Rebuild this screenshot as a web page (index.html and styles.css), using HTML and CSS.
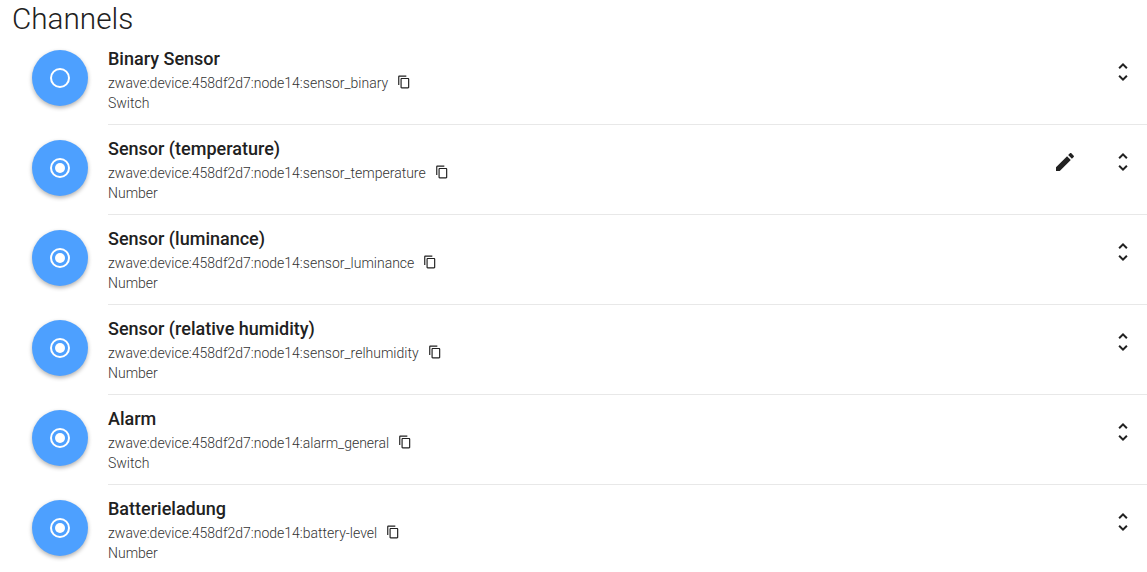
FILE: index.html
```html
<!doctype html>
<html lang="en">
<head>
    <meta charset="utf-8">
    <title>Channels</title>
    <link rel="stylesheet" href="styles.css">
</head>
<body>
    <h1>Channels</h1>
    <ul class="channels">
        <li class="channel">
            <div class="avatar"><svg width="24" height="24" viewBox="0 0 24 24"><circle cx="12" cy="12" r="9" class="ring"/></svg></div>
            <div class="content">
                <div class="info">
                    <h2>Binary Sensor</h2>
                    <p class="uid">zwave:device:458df2d7:node14:sensor_binary<svg class="copy" width="14" height="14" viewBox="0 0 24 24"><path d="M16 1H4c-1.1 0-2 .9-2 2v14h2V3h12V1zm3 4H8c-1.1 0-2 .9-2 2v14c0 1.1.9 2 2 2h11c1.1 0 2-.9 2-2V7c0-1.100-.9-2-2-2zm0 16H8V7h11v14z"/></svg></p>
                    <p class="type">Switch</p>
                </div>
                <svg class="expand" width="24" height="24" viewBox="0 0 24 24"><path d="M12 5.830L15.170 9l1.410-1.410L12 3 7.410 7.590 8.830 9 12 5.830zm0 12.340L8.830 15l-1.410 1.410L12 21l4.590-4.590L15.170 15 12 18.170z"/></svg>
            </div>
        </li>
        <li class="channel">
            <div class="avatar"><svg width="24" height="24" viewBox="0 0 24 24"><circle cx="12" cy="12" r="9" class="ring"/><circle cx="12" cy="12" r="5" class="dot"/></svg></div>
            <div class="content">
                <div class="info">
                    <h2>Sensor (temperature)</h2>
                    <p class="uid">zwave:device:458df2d7:node14:sensor_temperature<svg class="copy" width="14" height="14" viewBox="0 0 24 24"><path d="M16 1H4c-1.1 0-2 .9-2 2v14h2V3h12V1zm3 4H8c-1.1 0-2 .9-2 2v14c0 1.1.9 2 2 2h11c1.1 0 2-.9 2-2V7c0-1.100-.9-2-2-2zm0 16H8V7h11v14z"/></svg></p>
                    <p class="type">Number</p>
                </div>
                <svg class="edit" width="24" height="24" viewBox="0 0 24 24"><path d="M3 17.250V21h3.750L17.810 9.940l-3.750-3.750L3 17.250zM20.710 7.040c.39-.39.39-1.020 0-1.410l-2.340-2.340c-.39-.39-1.020-.39-1.410 0l-1.830 1.830 3.750 3.750 1.830-1.830z"/></svg>
                <svg class="expand" width="24" height="24" viewBox="0 0 24 24"><path d="M12 5.830L15.170 9l1.410-1.410L12 3 7.410 7.590 8.830 9 12 5.830zm0 12.340L8.830 15l-1.410 1.410L12 21l4.590-4.590L15.170 15 12 18.170z"/></svg>
            </div>
        </li>
        <li class="channel">
            <div class="avatar"><svg width="24" height="24" viewBox="0 0 24 24"><circle cx="12" cy="12" r="9" class="ring"/><circle cx="12" cy="12" r="5" class="dot"/></svg></div>
            <div class="content">
                <div class="info">
                    <h2>Sensor (luminance)</h2>
                    <p class="uid">zwave:device:458df2d7:node14:sensor_luminance<svg class="copy" width="14" height="14" viewBox="0 0 24 24"><path d="M16 1H4c-1.1 0-2 .9-2 2v14h2V3h12V1zm3 4H8c-1.1 0-2 .9-2 2v14c0 1.1.9 2 2 2h11c1.1 0 2-.9 2-2V7c0-1.100-.9-2-2-2zm0 16H8V7h11v14z"/></svg></p>
                    <p class="type">Number</p>
                </div>
                <svg class="expand" width="24" height="24" viewBox="0 0 24 24"><path d="M12 5.830L15.170 9l1.410-1.410L12 3 7.410 7.590 8.830 9 12 5.830zm0 12.340L8.830 15l-1.410 1.410L12 21l4.590-4.590L15.170 15 12 18.170z"/></svg>
            </div>
        </li>
        <li class="channel">
            <div class="avatar"><svg width="24" height="24" viewBox="0 0 24 24"><circle cx="12" cy="12" r="9" class="ring"/><circle cx="12" cy="12" r="5" class="dot"/></svg></div>
            <div class="content">
                <div class="info">
                    <h2>Sensor (relative humidity)</h2>
                    <p class="uid">zwave:device:458df2d7:node14:sensor_relhumidity<svg class="copy" width="14" height="14" viewBox="0 0 24 24"><path d="M16 1H4c-1.1 0-2 .9-2 2v14h2V3h12V1zm3 4H8c-1.1 0-2 .9-2 2v14c0 1.1.9 2 2 2h11c1.1 0 2-.9 2-2V7c0-1.100-.9-2-2-2zm0 16H8V7h11v14z"/></svg></p>
                    <p class="type">Number</p>
                </div>
                <svg class="expand" width="24" height="24" viewBox="0 0 24 24"><path d="M12 5.830L15.170 9l1.410-1.410L12 3 7.410 7.590 8.830 9 12 5.830zm0 12.340L8.830 15l-1.410 1.410L12 21l4.590-4.590L15.170 15 12 18.170z"/></svg>
            </div>
        </li>
        <li class="channel">
            <div class="avatar"><svg width="24" height="24" viewBox="0 0 24 24"><circle cx="12" cy="12" r="9" class="ring"/><circle cx="12" cy="12" r="5" class="dot"/></svg></div>
            <div class="content">
                <div class="info">
                    <h2>Alarm</h2>
                    <p class="uid">zwave:device:458df2d7:node14:alarm_general<svg class="copy" width="14" height="14" viewBox="0 0 24 24"><path d="M16 1H4c-1.1 0-2 .9-2 2v14h2V3h12V1zm3 4H8c-1.1 0-2 .9-2 2v14c0 1.1.9 2 2 2h11c1.1 0 2-.9 2-2V7c0-1.100-.9-2-2-2zm0 16H8V7h11v14z"/></svg></p>
                    <p class="type">Switch</p>
                </div>
                <svg class="expand" width="24" height="24" viewBox="0 0 24 24"><path d="M12 5.830L15.170 9l1.410-1.410L12 3 7.410 7.590 8.830 9 12 5.830zm0 12.340L8.830 15l-1.410 1.410L12 21l4.590-4.590L15.170 15 12 18.170z"/></svg>
            </div>
        </li>
        <li class="channel">
            <div class="avatar"><svg width="24" height="24" viewBox="0 0 24 24"><circle cx="12" cy="12" r="9" class="ring"/><circle cx="12" cy="12" r="5" class="dot"/></svg></div>
            <div class="content">
                <div class="info">
                    <h2>Batterieladung</h2>
                    <p class="uid">zwave:device:458df2d7:node14:battery-level<svg class="copy" width="14" height="14" viewBox="0 0 24 24"><path d="M16 1H4c-1.1 0-2 .9-2 2v14h2V3h12V1zm3 4H8c-1.1 0-2 .9-2 2v14c0 1.1.9 2 2 2h11c1.1 0 2-.9 2-2V7c0-1.100-.9-2-2-2zm0 16H8V7h11v14z"/></svg></p>
                    <p class="type">Number</p>
                </div>
                <svg class="expand" width="24" height="24" viewBox="0 0 24 24"><path d="M12 5.830L15.170 9l1.410-1.410L12 3 7.410 7.590 8.830 9 12 5.830zm0 12.340L8.830 15l-1.410 1.410L12 21l4.590-4.590L15.170 15 12 18.170z"/></svg>
            </div>
        </li>
    </ul>
</body>
</html>
```
FILE: styles.css
```css
* {
    padding: 0;
    margin: 0;
    box-sizing: border-box;
}
html, body {
    height: 572px;
    overflow: hidden;
}
body {
    background: #fff;
    color: #212121;
    font-family: Roboto, sans-serif;
}
h1 {
    font-size: 29.7px;
    font-weight: 300;
    line-height: 34px;
    padding: 2px 0 0 12px;
    height: 35px;
}
.channels {
    list-style: none;
    padding-left: 32px;
}
.channel {
    display: flex;
    height: 90px;
}
.avatar {
    width: 56px;
    height: 56px;
    margin: 15px 20px 0 0;
    flex: none;
    border-radius: 50%;
    background: #4da0ff;
    box-shadow: 0 2px 4px rgba(0, 0, 0, .3);
    display: flex;
    align-items: center;
    justify-content: center;
}
.ring {
    fill: none;
    stroke: #fff;
    stroke-width: 2;
}
.dot {
    fill: #fff;
}
.content {
    flex: 1;
    display: flex;
    align-items: flex-start;
    padding-right: 12px;
    border-bottom: 1px solid #e8e8e8;
}
.channel:last-child .content {
    border-bottom: 0;
}
.info {
    flex: 1;
    padding-top: 13px;
}
h2 {
    font-size: 18px;
    font-weight: 500;
    line-height: 22px;
}
.uid, .type {
    font-size: 14px;
    font-weight: 300;
    line-height: 20px;
    color: #333;
}
.uid {
    margin-top: 3px;
}
.copy {
    margin-left: 9px;
    vertical-align: -1px;
    fill: #212121;
}
.edit {
    margin: 25px 34px 0 0;
    fill: #212121;
}
.expand {
    margin-top: 25px;
    fill: #212121;
}
```
